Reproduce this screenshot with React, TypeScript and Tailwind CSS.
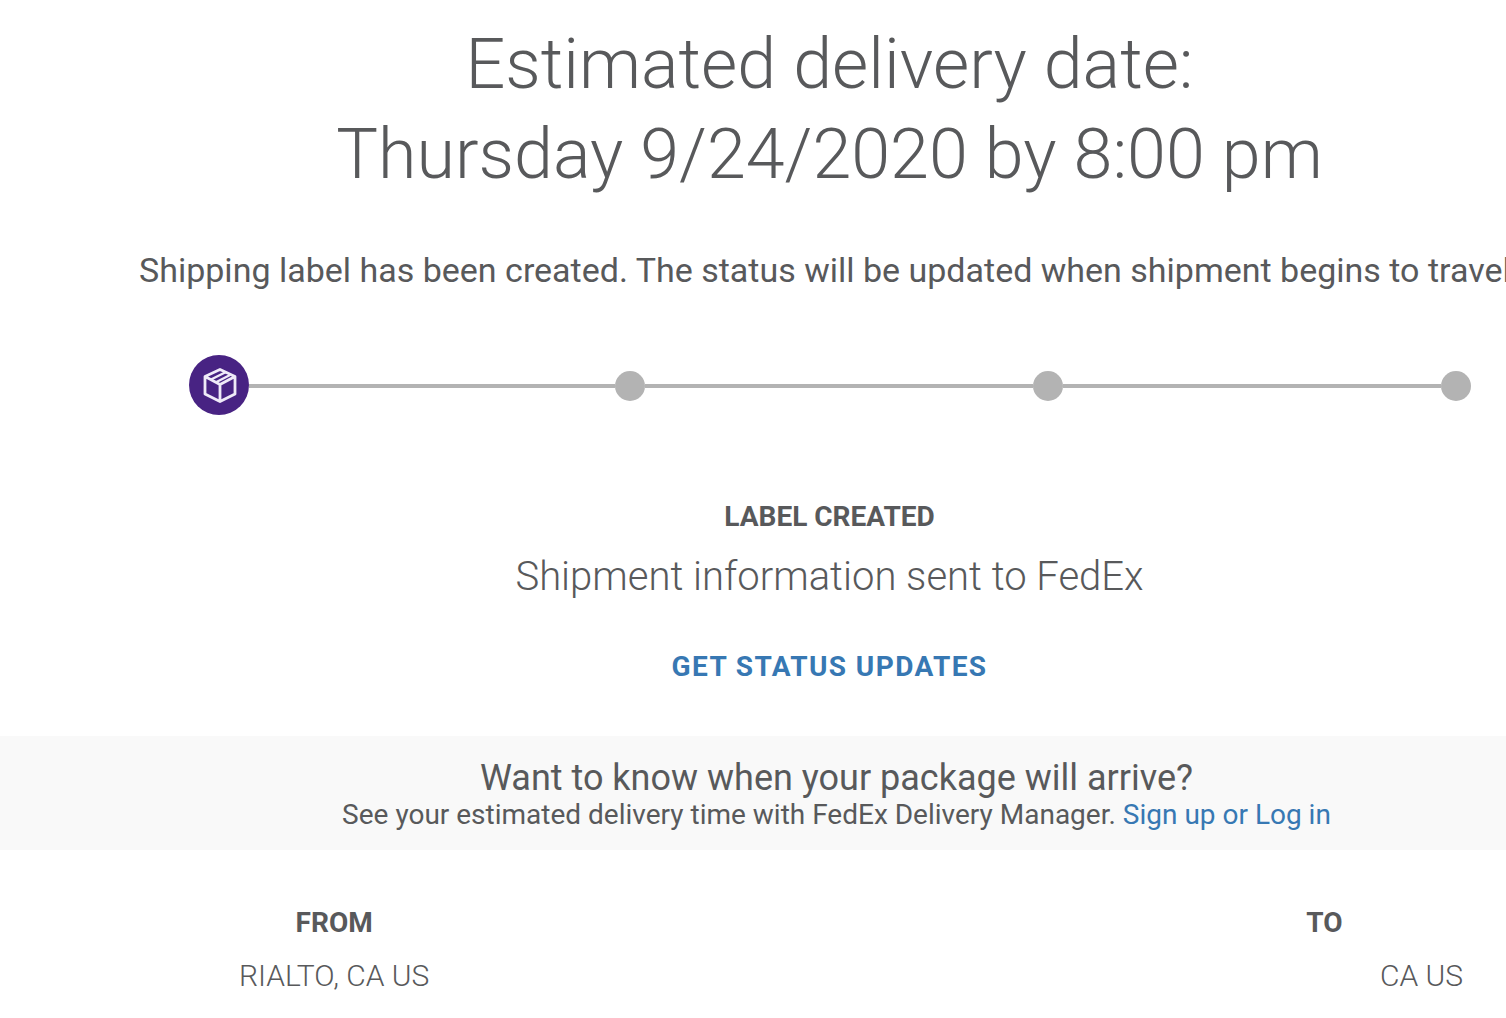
const stops = [
  { name: "In transit", width: "w-[366px]" },
  { name: "Out for delivery", width: "w-[388px]" },
  { name: "Delivered", width: "w-[378px]" },
];

function PackageBadge() {
  return (
    <span className="flex size-[60px] shrink-0 items-center justify-center rounded-full bg-[#482383]">
      <svg viewBox="0 0 36 36" className="size-9" fill="none" stroke="#efeaf8" strokeWidth="2.8" strokeLinejoin="round" aria-hidden="true">
        <path d="M19 2.5 34 9.5V27L19 34.5 4 27V9.5zM4 9.5 19 17.5l15-8M19 17.5v17" />
        <path strokeWidth="2.4" d="M10 12.5 25 5M15.5 15 30 7.5" />
      </svg>
    </span>
  );
}

export default function App() {
  return (
    <main className="min-h-screen overflow-x-hidden bg-white font-[Roboto,sans-serif] text-[#58595b]">
      <div className="flex flex-col items-center pl-[153px]">
        <h1 className="pt-[19px] text-center text-[70px] leading-[90px] font-light whitespace-nowrap">
          Estimated delivery date:
          <br />
          Thursday 9/24/2020 by 8:00 pm
        </h1>
        <p className="mt-[51px] -ml-[14px] self-start text-[34px] leading-10 whitespace-nowrap">
          Shipping label has been created. The status will be updated when shipment begins to travel.
        </p>
        <ol className="mt-[65px] flex w-full items-center pr-[35px] pl-9" aria-label="Shipment progress">
          <li aria-label="Label created"><PackageBadge /></li>
          {stops.map((stop) => (
            <li key={stop.name} aria-label={stop.name} className={`${stop.width} flex grow items-center pt-0.5`}>
              <span className="h-1 grow bg-[#b3b3b3]" />
              <span className="size-[30px] rounded-full bg-[#b3b3b3]" />
            </li>
          ))}
        </ol>
        <h2 className="mt-[84px] text-[28px] leading-9 font-bold">LABEL CREATED</h2>
        <p className="mt-[18px] text-[40px] leading-12 font-light">Shipment information sent to FedEx</p>
        <a href="#updates" className="mt-12 text-[28px] leading-9 font-bold tracking-wider text-[#3778b3]">GET STATUS UPDATES</a>
      </div>
      <section className="mt-[51px] bg-[#f9f9f9] pt-[21px] pb-[19px] pl-[167px] text-center">
        <h2 className="text-[36px] leading-[42px]">Want to know when your package will arrive?</h2>
        <p className="text-[28px] leading-8">
          See your estimated delivery time with FedEx Delivery Manager.{" "}
          <a href="#login" className="text-[#3778b3]">Sign up or Log in</a>
        </p>
      </section>
      <section className="flex justify-between pt-[55px] pr-[43px] pl-[239px] text-[30px]">
        <div className="text-center">
          <h3 className="text-[28px] leading-9 font-bold">FROM</h3>
          <p className="mt-[15px] leading-10 font-light">RIALTO, CA US</p>
        </div>
        <div className="w-[277px] text-center">
          <h3 className="text-[28px] leading-9 font-bold">TO</h3>
          <p className="mt-[15px] text-right leading-10 font-light">CA US</p>
        </div>
      </section>
    </main>
  );
}
